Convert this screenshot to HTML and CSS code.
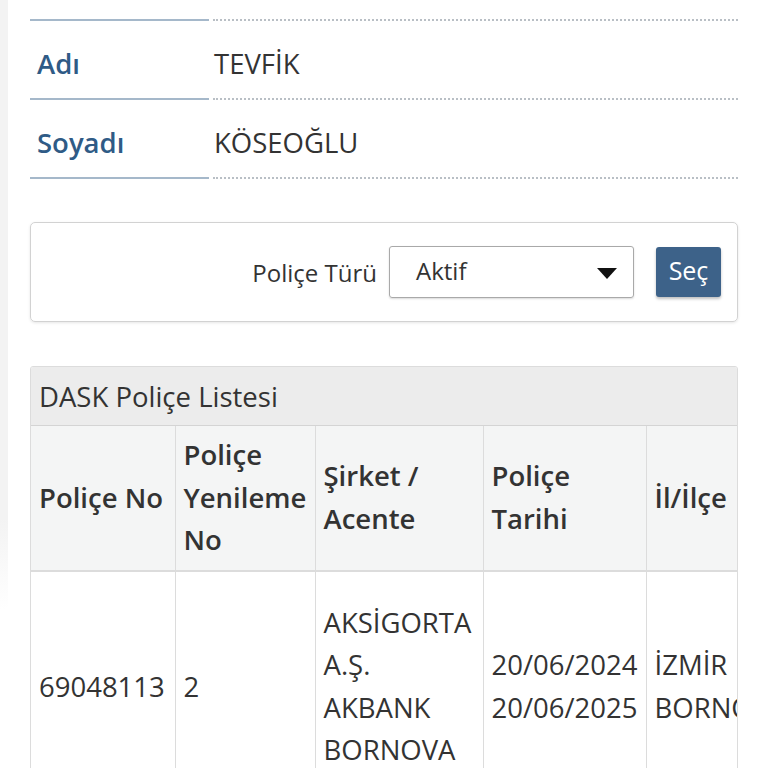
FILE: index.html
```html
<!DOCTYPE html>
<html>
<head>
    <meta charset="UTF-8">
    <title>DASK Poliçe Sorgulama</title>
    <link rel="stylesheet" href="styles.css">
</head>
<body>
<div class="page">
    <div class="edge"></div>

    <div class="content">

        <!-- kişi bilgileri -->
        <div class="details">
            <div class="label cut"></div>
            <div class="value cut"></div>

            <div class="label">Adı</div>
            <div class="value">TEVFİK</div>

            <div class="label">Soyadı</div>
            <div class="value">KÖSEOĞLU</div>
        </div>

        <!-- filtre -->
        <div class="filter">
            <span class="filter-label">Poliçe Türü</span>
            <div class="select">
                <span>Aktif</span>
                <svg width="20" height="11" viewBox="0 0 20 11"><path d="M0 0 H20 L10 11 Z" fill="#111"/></svg>
            </div>
            <button class="btn">Seç</button>
        </div>

        <!-- liste -->
        <div class="panel">
            <div class="panel-heading">DASK Poliçe Listesi</div>
            <table class="grid">
                <colgroup>
                    <col style="width: 144px">
                    <col style="width: 140px">
                    <col style="width: 168px">
                    <col style="width: 163px">
                    <col style="width: 150px">
                </colgroup>
                <thead>
                    <tr>
                        <th>Poliçe No</th>
                        <th>Poliçe Yenileme No</th>
                        <th>Şirket / Acente</th>
                        <th>Poliçe Tarihi</th>
                        <th>İl/İlçe</th>
                    </tr>
                </thead>
                <tbody>
                    <tr>
                        <td>69048113</td>
                        <td>2</td>
                        <td>AKSİGORTA A.Ş. AKBANK BORNOVA</td>
                        <td>20/06/2024<br>20/06/2025</td>
                        <td>İZMİR<br>BORNOVA</td>
                    </tr>
                </tbody>
            </table>
        </div>

    </div>
</div>
</body>
</html>
```

FILE: styles.css
```css
body {
    margin: 0;
    font-family: "Open Sans", "DejaVu Sans", sans-serif;
    font-size: 27.5px;
    color: #333;
    background: #fff;
}

.page {
    display: flex;
    align-items: flex-start;
}

.edge {
    width: 8px;
    height: 610px;
    flex-shrink: 0;
    background: linear-gradient(to bottom, #f3f3f3 85%, #fff);
}

.content {
    flex: 1;
    padding: 0 30px 0 22px;
    min-width: 0;
}

/* kişi bilgileri */

.details {
    display: grid;
    grid-template-columns: 179px 1fr;
    column-gap: 4px;
}

.details .label,
.details .value {
    height: 77px;
    box-sizing: border-box;
    padding-top: 8px;
    display: flex;
    align-items: center;
    line-height: 1;
}

.details .label {
    height: 79px;
    padding-left: 7px;
    color: #2f5b86;
    font-weight: 600;
    border-bottom: 2px solid #a5b8ca;
}

.details .value {
    height: 79px;
    padding-left: 1px;
    border-bottom: 2px dotted #b9bfc5;
}

.details .cut {
    height: 21px;
    padding: 0;
}

/* filtre */

.filter {
    margin-top: 43px;
    height: 98px;
    font-size: 24px;
    border: 1px solid #d2d2d2;
    border-radius: 5px;
    box-shadow: 0 1px 3px rgba(0, 0, 0, 0.1);
    display: flex;
    align-items: center;
    justify-content: flex-end;
    padding: 0 16px 0 20px;
}

.filter-label {
    margin-right: 12px;
}

.select {
    width: 245px;
    height: 52px;
    box-sizing: border-box;
    border: 1px solid #a9a9a9;
    border-radius: 3px;
    box-shadow: 0 1px 2px rgba(0, 0, 0, 0.15);
    display: flex;
    align-items: center;
    justify-content: space-between;
    padding: 0 16px 4px 26px;
}

.select svg {
    margin-top: 6px;
}

.btn {
    margin-left: 22px;
    width: 65px;
    height: 50px;
    border: none;
    border-radius: 3px;
    background: #3d6289;
    color: #fff;
    font-family: inherit;
    font-size: 25px;
    padding: 0 0 4px;
    box-shadow: 0 2px 3px rgba(0, 0, 0, 0.25);
}

/* liste */

.panel {
    margin-top: 44px;
    border: 1px solid #dcdcdc;
    border-radius: 3px 3px 0 0;
    overflow: hidden;
}

.panel-heading {
    height: 58px;
    background: #ececec;
    border-bottom: 1px solid #d4d4d4;
    padding-left: 8px;
    display: flex;
    align-items: center;
}

.grid {
    table-layout: fixed;
    border-collapse: collapse;
    width: 765px;
    line-height: 42.5px;
}

.grid th,
.grid td {
    border: 1px solid #dcdcdc;
    padding: 8px 8px;
    text-align: left;
    vertical-align: middle;
}

.grid th:first-child,
.grid td:first-child {
    border-left: none;
}

.grid thead th {
    background: #f4f5f5;
    font-weight: 600;
    border-top: none;
    border-bottom: 2px solid #dcdcdc;
}

.grid tbody tr {
    height: 232px;
}
```
